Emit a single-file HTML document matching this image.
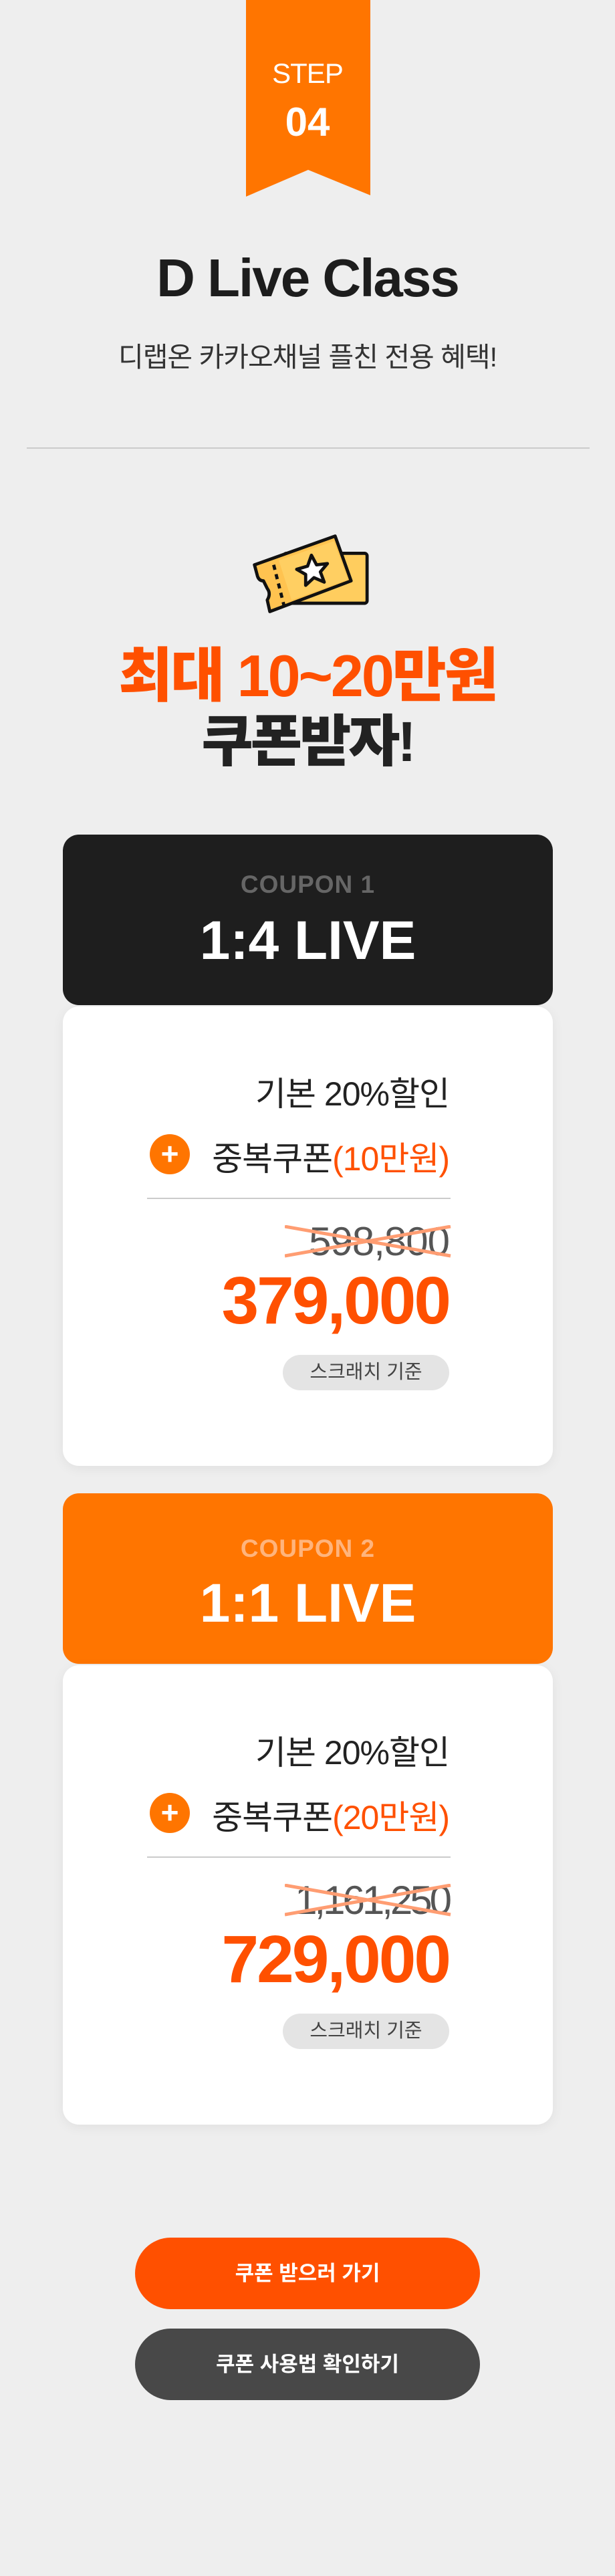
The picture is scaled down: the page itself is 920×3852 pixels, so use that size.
<!DOCTYPE html>
<html><head><meta charset="utf-8"><style>
*{margin:0;padding:0;box-sizing:border-box}
body{width:920px;height:3852px;background:#eeeeee;position:relative;overflow:hidden;font-family:"Liberation Sans","Noto Sans CJK KR",sans-serif}
.a{position:absolute}
.c{text-align:center;left:0;width:920px}
.hd{position:absolute;left:94px;width:733px;height:255px;border-radius:24px}
.wc{position:absolute;left:94px;width:733px;height:687px;background:#fff;border-radius:24px;box-shadow:0 4px 18px rgba(0,0,0,.06)}
.cp{position:absolute;left:0;width:100%;text-align:center;font-weight:700;font-size:37px;letter-spacing:1px}
.lv{position:absolute;left:0;width:100%;text-align:center;font-weight:700;font-size:82px;color:#fff;line-height:1}
.r{position:absolute;right:248px;text-align:right;white-space:nowrap}
.btn{position:absolute;left:202px;width:516px;height:107px;border-radius:54px;color:#fff;font-weight:700;font-size:31px;text-align:center;line-height:107px}
</style></head><body>
<svg class="a" style="left:368px;top:0" width="186" height="296" viewBox="0 0 186 296"><polygon points="0,0 186,0 186,292 93,254 0,294" fill="#ff7500"/></svg>
<div class="a c" style="top:86px;font-size:42px;color:#fff;letter-spacing:-1px">STEP</div>
<div class="a c" style="top:148px;font-size:60px;font-weight:700;color:#fff">04</div>
<div class="a c" style="top:370px;font-size:80px;font-weight:700;color:#1d1d1d;letter-spacing:-2px">D Live Class</div>
<div class="a c" style="top:500px;font-size:41px;color:#333;letter-spacing:-1px">디랩온 카카오채널 플친 전용 혜택!</div>
<div class="a" style="left:40px;top:669px;width:842px;height:2px;background:#cbcbcb"></div>

<svg class="a" style="left:366px;top:792px" width="194" height="134" viewBox="0 0 200 140">
<g stroke="#111" stroke-width="5" stroke-linejoin="round">
<rect x="60" y="37" width="130" height="78" rx="4" fill="#ffcd5e" />
<path d="M14,55 L140,10 L165,80 L38,128 L34,110 Q40,100 34,92 L28,80 Q20,80 18,70 Z" fill="#ffc350"/>
</g>
<path d="M52,48 L138,18 L160,78 L72,110 Z" fill="#ffd064" opacity=".9"/>
<path d="M44,55 L60,118" stroke="#111" stroke-width="5" stroke-dasharray="8 7"/>
<path d="M103,40 L111,55 L128,53 L117,66 L123,82 L107,75 L94,87 L94,70 L80,62 L97,57 Z" fill="#fff" stroke="#111" stroke-width="5" stroke-linejoin="round"/>
</svg>

<div class="a c" style="top:940px;font-size:88px;font-weight:900;color:#ff5000;letter-spacing:-3px">최대 10~20만원</div>
<div class="a c" style="top:1042px;font-size:84px;font-weight:900;color:#222;letter-spacing:-4px">쿠폰받자!</div>

<!-- card 1 -->
<div class="hd" style="top:1248px;background:#1e1e1e">
<div class="cp" style="top:54px;color:#666">COUPON 1</div>
<div class="lv" style="top:118px">1:4 LIVE</div>
</div>
<div class="wc" style="top:1505px"></div>
<div class="r" style="top:1596px;font-size:50px;color:#222;letter-spacing:-1px">기본 20%할인</div>
<div class="a" style="left:224px;top:1696px;width:60px;height:60px;border-radius:50%;background:#ff7500;color:#fff;font-size:46px;line-height:58px;text-align:center;font-weight:700">+</div>
<div class="r" style="top:1693px;font-size:50px;color:#222;letter-spacing:-1px">중복쿠폰<span style="color:#ff5000">(10만원)</span></div>
<div class="a" style="left:220px;top:1791px;width:454px;height:2px;background:#cbcbcb"></div>
<div class="r" style="top:1822px;font-size:60px;color:#555;letter-spacing:-1px">598,800</div>
<svg class="a" style="left:426px;top:1832px" width="250" height="50"><line x1="0" y1="46" x2="248" y2="2" stroke="#ff9d72" stroke-width="5"/><line x1="0" y1="2" x2="248" y2="46" stroke="#ff9d72" stroke-width="5"/></svg>
<div class="r" style="top:1888px;font-size:100px;font-weight:700;color:#ff5000;letter-spacing:-3px">379,000</div>
<div class="a" style="left:423px;top:2026px;width:249px;height:53px;border-radius:27px;background:#e4e4e4;color:#444;font-size:29px;text-align:center;line-height:53px">스크래치 기준</div>

<!-- card 2 -->
<div class="hd" style="top:2233px;background:#ff7500">
<div class="cp" style="top:62px;color:#ffb47c">COUPON 2</div>
<div class="lv" style="top:124px">1:1 LIVE</div>
</div>
<div class="wc" style="top:2490px"></div>
<div class="r" style="top:2581px;font-size:50px;color:#222;letter-spacing:-1px">기본 20%할인</div>
<div class="a" style="left:224px;top:2681px;width:60px;height:60px;border-radius:50%;background:#ff7500;color:#fff;font-size:46px;line-height:58px;text-align:center;font-weight:700">+</div>
<div class="r" style="top:2678px;font-size:50px;color:#222;letter-spacing:-1px">중복쿠폰<span style="color:#ff5000">(20만원)</span></div>
<div class="a" style="left:220px;top:2776px;width:454px;height:2px;background:#cbcbcb"></div>
<div class="r" style="top:2807px;font-size:60px;color:#555;letter-spacing:-4px">1,161,250</div>
<svg class="a" style="left:426px;top:2817px" width="250" height="50"><line x1="0" y1="46" x2="248" y2="2" stroke="#ff9d72" stroke-width="5"/><line x1="0" y1="2" x2="248" y2="46" stroke="#ff9d72" stroke-width="5"/></svg>
<div class="r" style="top:2873px;font-size:100px;font-weight:700;color:#ff5000;letter-spacing:-3px">729,000</div>
<div class="a" style="left:423px;top:3011px;width:249px;height:53px;border-radius:27px;background:#e4e4e4;color:#444;font-size:29px;text-align:center;line-height:53px">스크래치 기준</div>

<div class="btn" style="top:3346px;background:#ff5000">쿠폰 받으러 가기</div>
<div class="btn" style="top:3482px;background:#484848">쿠폰 사용법 확인하기</div>
</body></html>
